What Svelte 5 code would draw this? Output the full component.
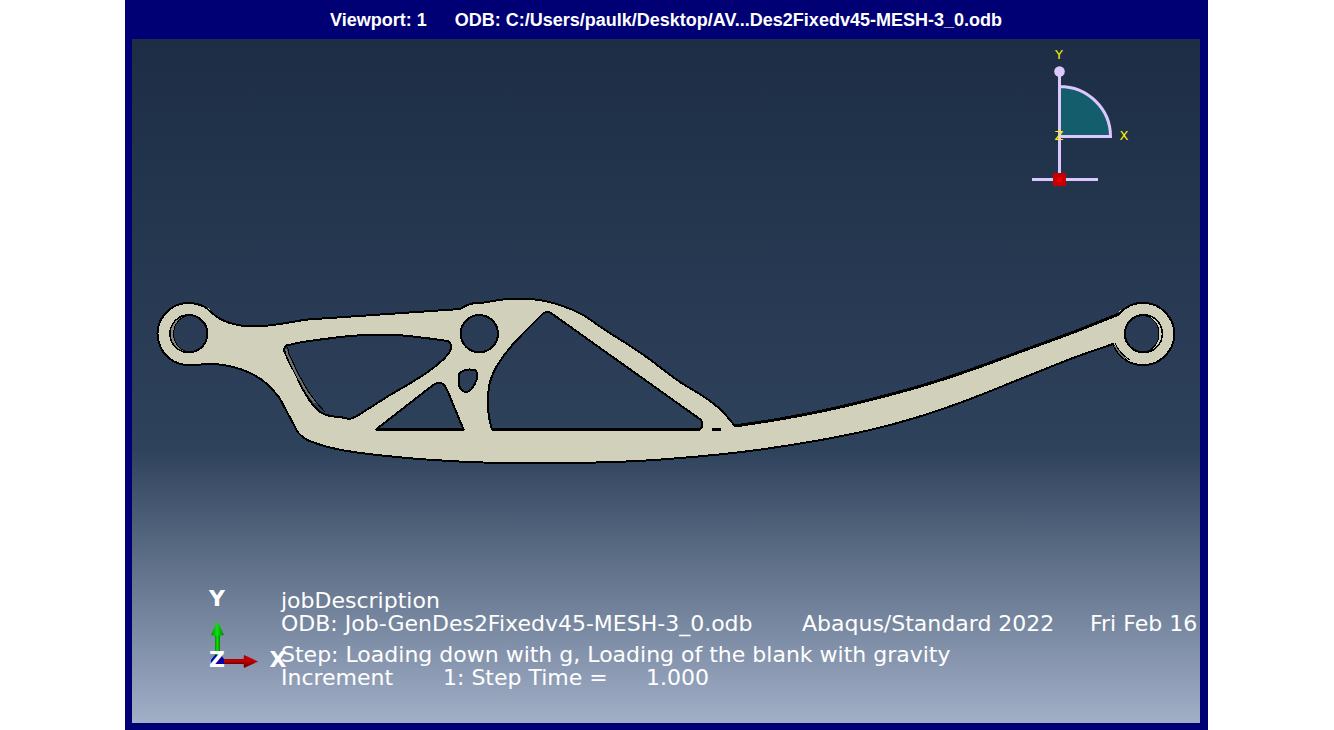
<script>
  // Joins runs of points into one path; each run is a smooth curve and runs meet in corners.
  // Tangents are weighted by chord length so that long and short spans blend without overshoot.
  function trace(runs) {
    let d = '';
    const dist = (p, q) => Math.hypot(q[0] - p[0], q[1] - p[1]);
    runs.forEach((p, r) => {
      d += `${r ? 'L' : 'M'}${p[0][0]} ${p[0][1]}`;
      const tangent = (i) => {
        const a = p[i - 1] ?? p[i];
        const b = p[i];
        const c = p[i + 1] ?? p[i];
        const ab = dist(a, b);
        const bc = dist(b, c);
        if (!ab) return [(c[0] - b[0]) / bc, (c[1] - b[1]) / bc];
        if (!bc) return [(b[0] - a[0]) / ab, (b[1] - a[1]) / ab];
        return [0, 1].map((k) => (((b[k] - a[k]) / ab) * bc + ((c[k] - b[k]) / bc) * ab) / (ab + bc));
      };
      for (let i = 0; i < p.length - 1; i++) {
        const b = p[i];
        const c = p[i + 1];
        const s = dist(b, c) / 3;
        const t = tangent(i);
        const u = tangent(i + 1);
        d += `C${b[0] + t[0] * s} ${b[1] + t[1] * s} ${c[0] - u[0] * s} ${c[1] - u[1] * s} ${c[0]} ${c[1]}`;
      }
    });
    return d;
  }

  const ellipse = (x, y, rx, ry = rx) => `M${x - rx} ${y}a${rx} ${ry} 0 1 0 ${2 * rx} 0a${rx} ${ry} 0 1 0 ${-2 * rx} 0Z`;

  const armTop = [[735, 426], [780, 419], [830, 409.3], [873, 399], [916.5, 387.3], [946.5, 378], [980, 366.5], [1026.5, 349.3], [1076.5, 331], [1119, 314]];

  const body = trace([
    [[193, 365], [183, 364.5], [173, 361], [164, 353], [159, 343], [157.5, 334], [159, 324], [164, 315], [173, 307], [183, 303.5], [194, 303.5], [205, 307], [210, 311], [217, 317], [227, 322], [242, 325.7], [268, 325.5], [290, 322.3], [305, 319.7]],
    [[305, 319.7], [460, 309]],
    [[460, 309], [470, 304], [483, 302.7], [503, 299.5], [518, 298.8], [533, 299.3], [543, 300.7], [560, 305], [583, 315], [602, 328]],
    [[602, 328], [643, 354.5], [680, 382], [706.5, 398.5], [720, 409], [735, 426]],
    armTop,
    [[1119, 314], [1125, 308.5], [1134, 304], [1143, 303], [1155, 305], [1165, 312], [1172, 322], [1174.5, 334], [1172, 346], [1165, 356], [1155, 363], [1143, 365], [1131, 363], [1122, 357], [1116, 350], [1113, 344]],
    [[1113, 344], [1076.5, 356.7], [1026.5, 376.5], [960, 402.8], [916.5, 417.5], [873, 429.3], [830, 438.3], [780, 446.7], [740, 452.2], [700, 456.3], [643, 460.7], [596.5, 462.5], [540, 463], [483, 462.5], [433, 460], [396.5, 457], [363, 453.3], [340, 449.7], [316.5, 443.5], [304, 438], [299, 433.5], [293, 423.3]],
    [[293, 423.3], [279, 397]],
    [[279, 397], [266.5, 383.5], [250, 373], [230, 366.2], [216.5, 364.2], [193, 365]]
  ]) + 'Z';

  const leftPocket = trace([
    [[286, 345.5], [303, 342], [327, 338.7], [350, 336], [375, 334.7], [400, 335.3], [423, 337.7], [448, 341]],
    [[448, 341], [451, 345], [450, 351], [446, 356.5], [437, 365], [417, 379], [390, 395]],
    [[390, 395], [357, 416]],
    [[357, 416], [350, 418.7], [340, 417], [330, 416], [321, 412.5], [313, 405], [305, 393], [295, 373], [286, 355], [284, 349], [286, 345.5]]
  ]) + 'Z';
  const triangle = trace([
    [[376, 429.5], [430, 387.5]],
    [[430, 387.5], [435, 384], [440, 382.7], [444.5, 385.5], [448, 392]],
    [[448, 392], [463.5, 429.5]]
  ]) + 'Z';
  const smallPocket = trace([
    [[458.5, 378], [459.3, 374], [463.5, 370.7], [470, 369.5], [476, 371], [477.3, 376], [475, 383.5], [471, 389.5], [466, 392], [461, 389.5], [458.7, 383.5], [458.5, 378]]
  ]) + 'Z';
  const mainPocket = trace([
    [[492, 429.5], [489, 417], [488, 397], [490, 382], [494, 371.5], [500, 361], [507, 351.5], [515, 342], [523.5, 333]],
    [[523.5, 333], [543, 313.5]],
    [[543, 313.5], [548, 311.7], [553, 314.5]],
    [[553, 314.5], [699, 418.5]],
    [[699, 418.5], [702, 421.5], [702, 426.5], [700, 429.5]]
  ]) + 'Z';

  const leftHole = ellipse(188.8, 333.7, 18.6);
  const rightHole = ellipse(1143.5, 333.7, 18.6);
  const part = [body, leftPocket, triangle, smallPocket, mainPocket, leftHole, ellipse(479.3, 333.7, 18.6), rightHole].join('');
  const leftBore = leftHole + ellipse(190.5, 333.7, 16.9, 18.4);
  const rightBore = rightHole + ellipse(1142, 333.7, 17, 18.4);
</script>

<main>
  <header>
    <h1><span>Viewport: 1</span> <span>ODB: C:/Users/paulk/Desktop/AV...Des2Fixedv45-MESH-3_0.odb</span></h1>
  </header>

  <section class="stage">
    <svg class="scene" viewBox="132 39 1068 684" aria-hidden="true">
      <defs>
        <linearGradient id="green"><stop offset="0" stop-color="#008e00" /><stop offset=".45" stop-color="#10e010" /><stop offset="1" stop-color="#008600" /></linearGradient>
        <linearGradient id="red" x2="0" y2="1"><stop offset="0" stop-color="#a00000" /><stop offset=".4" stop-color="#c80000" /><stop offset="1" stop-color="#680000" /></linearGradient>
      </defs>

      <g class="part">
        <path class="solid" d={part} />
        <path class="bore" d={leftBore} />
        <path class="bore light" d={rightBore} />
        <path class="wall" d="M286 349L287.500 355L296.500 374L306.500 392L315 403M1115 346Q1119 353 1125 358" />
        <path class="edge" d="M287.500 347L289 354L298 373L308 391L316 402L325 412M1115 343Q1120 354 1130 360" />
        <path class="thick" d="M377 429.500H463M492 429.500H700M712 429.500H721" />
        <path class="arm" d={trace([armTop])} />
        <path class="edge" d="M287 346Q312 339 350 336M459.500 374V384M208 308L216 316" />
        <path class="glint" d="M208 308l2 2M1119 312l2 -2" />
      </g>

      <g class="compass">
        <path class="quadrant" d="M1059.500 86.500A51 50 0 0 1 1110.500 136.500H1059.500Z" />
        <path class="axis" d="M1059.500 72V179M1059.500 86.500A51 50 0 0 1 1110.500 136.500H1059.500M1032 179.500H1098" />
        <circle class="knob" cx="1059.500" cy="71.500" r="5.300" />
        <path fill="#c60000" d="M1053 173h13v13h-13z" />
        <path fill="#e60000" d="M1057 177h5v5h-5z" />
        <text x="1059" y="59">Y</text>
        <text x="1059" y="140">Z</text>
        <text x="1124" y="140">X</text>
      </g>

      <g class="triad">
        <path fill="url(#green)" d="M215 634h5v22h-5z" />
        <path fill="url(#green)" d="M217.500 621l6.500 14q-6.500 2 -13 0z" />
        <path fill="#0000a8" d="M211 660l4 -5h6l3 4v5h-13z" />
        <path fill="url(#red)" d="M224 659h20v5h-20z" />
        <path fill="url(#red)" d="M244 655l14 6.500l-14 6.500q-1 -6.500 0 -13z" />
        <text x="217" y="606">Y</text>
        <text x="217" y="667">Z</text>
        <text x="278" y="667">X</text>
      </g>
    </svg>

    <div class="notes">
      <p>jobDescription</p>
      <p class="job"><span>ODB: Job-GenDes2Fixedv45-MESH-3_0.odb</span> <span>Abaqus/Standard 2022</span> <span>Fri Feb 16</span></p>
      <p class="step">Step: Loading down with g, Loading of the blank with gravity</p>
      <p class="increment"><span>Increment</span> <span>1: Step Time =</span> <span>1.000</span></p>
    </div>
  </section>
</main>

<style>
  :global(body) {
    margin: 0;
    background: #fff;
  }
  main {
    box-sizing: border-box;
    min-height: 100vh;
    margin: 0 126px 0 125px;
    padding: 0 8px 7px 7px;
    display: flex;
    flex-direction: column;
    background: #000074;
  }
  header {
    height: 39px;
    display: flex;
    align-items: center;
    justify-content: center;
  }
  h1 {
    display: flex;
    gap: 28px;
    margin: 0;
    color: #fff;
    font: bold 18px/20px "Liberation Sans", Arial, sans-serif;
    white-space: nowrap;
  }
  .stage {
    position: relative;
    flex: 1;
    overflow: hidden;
    background: linear-gradient(#1c2d45, #2f425b 60%, #a1afc7);
  }
  .scene {
    display: block;
    width: 100%;
    height: auto;
  }
  .part {
    fill: none;
    stroke: #000;
    stroke-width: 2;
    stroke-linejoin: round;
    shape-rendering: crispEdges;
  }
  .solid {
    fill: #d1d1bb;
    fill-rule: evenodd;
  }
  .bore {
    fill: #85857a;
    fill-rule: evenodd;
    stroke-width: 1;
  }
  .light {
    fill: #d1d1bb;
  }
  .edge {
    stroke-width: 1;
  }
  .wall {
    stroke: #6e7168;
    stroke-width: 2;
  }
  .thick,
  .arm {
    stroke-width: 3;
  }
  .glint {
    stroke: #d1d1bb;
    stroke-width: 1;
  }
  .quadrant {
    fill: #135d6c;
  }
  .axis {
    fill: none;
    stroke: #dcc8ff;
    stroke-width: 3;
  }
  .knob {
    fill: #dcc8ff;
  }
  .compass text {
    fill: #fff000;
    font: 13px "DejaVu Sans", sans-serif;
    text-anchor: middle;
  }
  .triad text {
    fill: #fff;
    font: bold 22px "DejaVu Sans", sans-serif;
    text-anchor: middle;
  }
  .notes {
    position: absolute;
    left: 149px;
    bottom: 34px;
    color: #fff;
    font: 22px/23px "DejaVu Sans", Verdana, sans-serif;
    white-space: nowrap;
  }
  p {
    margin: 0;
  }
  .job {
    display: grid;
    grid-template-columns: 521px 288px auto;
  }
  .step {
    margin-top: 8px;
  }
  .increment {
    display: grid;
    grid-template-columns: 162px 203px auto;
  }
</style>
